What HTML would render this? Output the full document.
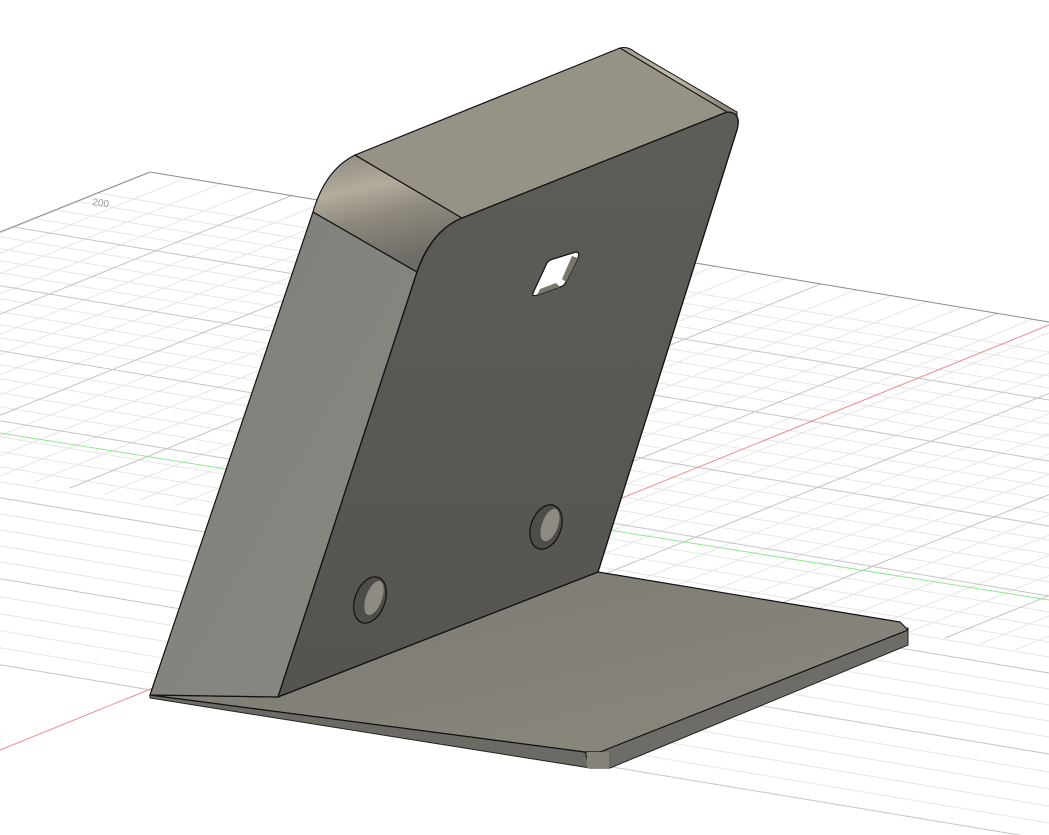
<!DOCTYPE html>
<html><head><meta charset="utf-8"><style>html,body{margin:0;padding:0;background:#fff;overflow:hidden;width:1049px;height:835px}svg{display:block}</style></head>
<body>
<svg width="1049" height="835" viewBox="0 0 1049 835" xmlns="http://www.w3.org/2000/svg">
<defs>
<clipPath id="gc"><polygon points="150,172 1049,322 1049,835 0,835 0,232"/></clipPath>
<clipPath id="all"><rect x="0" y="0" width="1049" height="835"/></clipPath>
<linearGradient id="fil" x1="0" y1="0" x2="0.3" y2="1">
<stop offset="0" stop-color="#8a867c"/><stop offset="0.35" stop-color="#b3ac9c"/><stop offset="0.6" stop-color="#8e897e"/><stop offset="1" stop-color="#6e6c66"/></linearGradient>
<linearGradient id="fil2" x1="0" y1="0" x2="0.5" y2="1">
<stop offset="0" stop-color="#a09a8c"/><stop offset="0.5" stop-color="#c4bcaa"/><stop offset="1" stop-color="#8e897e"/></linearGradient>
<linearGradient id="front" x1="0" y1="0" x2="0" y2="1">
<stop offset="0" stop-color="#5e5c56"/><stop offset="1" stop-color="#565450"/></linearGradient>
<linearGradient id="side" x1="0" y1="0" x2="1" y2="1">
<stop offset="0" stop-color="#7e7f7a"/><stop offset="1" stop-color="#8a8982"/></linearGradient>
<linearGradient id="base" x1="0" y1="0" x2="1" y2="1">
<stop offset="0" stop-color="#7b7870"/><stop offset="1" stop-color="#8c897f"/></linearGradient>
</defs>
<g clip-path="url(#all)">
<g clip-path="url(#gc)" stroke-width="1" fill="none">
<g stroke="#e6e6e6">
<path d="M-400,110 L1600,444 M-400,122 L1600,456 M-400,134 L1600,468 M-400,146 L1600,480 M-400,170 L1600,504 M-400,182 L1600,516 M-400,194 L1600,528 M-400,206 L1600,540 M-400,232 L1600,566 M-400,245 L1600,579 M-400,258 L1600,592 M-400,271 L1600,605 M-400,298 L1600,632 M-400,312 L1600,646 M-400,326 L1600,660 M-400,340 L1600,674 M-400,370 L1600,704 M-400,385 L1600,719 M-400,400 L1600,734 M-400,415 L1600,749 M-400,447 L1600,781 M-400,463 L1600,797 M-400,479 L1600,813 M-400,495 L1600,829 M-400,530 L1600,864 M-400,547 L1600,881 M-400,564 L1600,898 M-400,581 L1600,915"/>
<path d="M180,160 L-420,404 M215,166 L-385,410 M250,172 L-350,416 M285,178 L-315,422 M355,190 L-245,434 M390,196 L-210,440 M425,202 L-175,446 M460,208 L-140,452 M530,220 L-70,464 M565,226 L-35,470 M600,232 L0,476 M635,238 L35,482 M705,250 L105,494 M740,256 L140,500 M775,262 L175,506 M810,268 L210,512 M880,280 L280,524 M915,286 L315,530 M950,292 L350,536 M985,298 L385,542 M1055,310 L455,554 M1090,316 L490,560 M1125,322 L525,566 M1160,328 L560,572 M1230,340 L630,584 M1265,346 L665,590 M1300,352 L700,596 M1335,358 L735,602 M1405,370 L805,614 M1440,376 L840,620 M1475,382 L875,626 M1510,388 L910,632 M1580,400 L980,644 M1615,406 L1015,650 M1650,412 L1050,656 M1685,418 L1085,662"/>
</g>
<g stroke="#c4c4c4">
<path d="M-400,158 L1600,492 M-400,219 L1600,553 M-400,284 L1600,618 M-400,354 L1600,688 M-400,431 L1600,765 M-400,512 L1600,846 M-400,598 L1600,932"/>
<path d="M320,184 L-280,428 M495,214 L-105,458 M670,244 L70,488 M845,274 L245,518 M1020,304 L420,548 M1195,334 L595,578 M1370,364 L770,608 M1545,394 L945,638"/>
</g>
<path d="M0,433 L1049,600" stroke="#8fe88f"/>
<path d="M0,750 L1049,325" stroke="#f08a8a"/>
</g>
<path d="M0,232 L150,172 L1049,322" stroke="#8a8a8a" fill="none"/>
<text x="92" y="205" font-family="Liberation Sans, sans-serif" font-size="10" fill="#999" transform="rotate(8 92 205)">200</text>

<!-- base -->
<polygon points="150,695 585,752 590,768 150,698" fill="#6c6a64" stroke="#222" stroke-width="1"/>
<polygon points="585,752 908,628 908,645 610,768 590,768" fill="#6e6c66" stroke="#222" stroke-width="1"/>
<polygon points="150,695 278,697 598,572 900,622 908,630 600,752 585,752" fill="url(#base)" stroke="#111" stroke-width="1.2" stroke-linejoin="round"/>
<rect x="587" y="752" width="22" height="16" fill="#86837b"/>
<!-- left side face -->
<polygon points="150,695 313,212 417,272 278,697" fill="url(#side)" stroke="#111" stroke-width="1.2"/>
<path d="M313,212 Q325,170 355,155 L462,218 Q430,232 417,272 Z" fill="url(#fil)" stroke="#111" stroke-width="1.2"/>
<polygon points="355,155 620,48 727,112 462,218" fill="#979286" stroke="#111" stroke-width="1.2"/>
<path d="M620,48 Q628,46 635,52 L737,112 Q737,114 737,120 L727,112 Z" fill="url(#fil2)" stroke="#111" stroke-width="1"/>
<path d="M278,697 L417,272 Q432,230 462,218 L727,112 Q742,112 737,130 L598,572 Z" fill="url(#front)" stroke="#111" stroke-width="1.3" stroke-linejoin="round"/>
<path d="M533,293 L547,263 Q549,260 553,259 L576,252 Q580,252 578,258 L566,282 Q564,286 560,287 L537,295 Q532,297 533,293 Z" fill="#fff" stroke="#111" stroke-width="1.2"/>
<path d="M566,282 L578,258 L572,256 L562,279 Z M537,295 L560,287 L556,283 L540,289 Z" fill="#7a776f"/>
<ellipse cx="370" cy="600" rx="15" ry="24" transform="rotate(20 370 600)" fill="#4f4d49" stroke="#111" stroke-width="1.2"/>
<ellipse cx="374" cy="598" rx="8" ry="18" transform="rotate(20 374 598)" fill="#8e8b83"/>
<ellipse cx="546" cy="527" rx="15" ry="23" transform="rotate(20 546 527)" fill="#4f4d49" stroke="#111" stroke-width="1.2"/>
<ellipse cx="550" cy="525" rx="8" ry="17" transform="rotate(20 550 525)" fill="#8e8b83"/>
</g>
</svg>
</body></html>
